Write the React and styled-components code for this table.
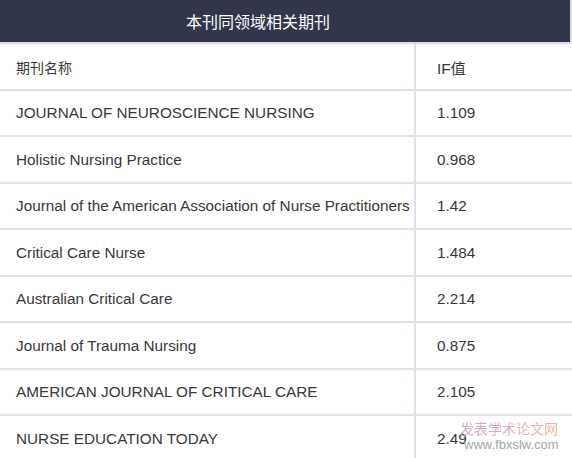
import React from "react";
import styled, { createGlobalStyle } from "styled-components";

const Global = createGlobalStyle`
  html, body { margin: 0; padding: 0; background: #fff; }
  body { font-family: "Liberation Sans", Arial, "Noto Sans CJK SC", sans-serif; overflow: hidden; }
`;

const Wrap = styled.div`
  position: relative;
  width: 572px;
  height: 458px;
  overflow: hidden;
  background: #fff;
`;

const Title = styled.div`
  height: 42px;
  background: #31364a;
  color: #fff;
  font-size: 16px;
  font-family: "Noto Sans CJK SC", sans-serif;
  display: flex;
  align-items: center;
  padding-left: 186px;
  border-right: 2px solid #d9dfe6;
  border-bottom: 2px solid #d9dfe6;
`;

const Row = styled.div`
  display: grid;
  grid-template-columns: 416px 1fr;
  height: ${(p) => p.$h}px;
  border-bottom: 2px solid #dce2e9;
  box-sizing: border-box;
`;

const Cell = styled.div`
  display: flex;
  align-items: center;
  padding-left: ${(p) => (p.$num ? 21 : 16)}px;
  font-size: 15.3px;
  color: #383838;
  white-space: nowrap;
  border-right: ${(p) => (p.$num ? "none" : "2px solid #dce2e9")};
  font-family: ${(p) =>
    p.$cjk
      ? '"Noto Sans CJK SC", sans-serif'
      : '"Liberation Sans", Arial, "Noto Sans CJK SC", sans-serif'};
  ${(p) => (p.$cjk ? "font-size: 14px;" : "")}
`;

const Mark = styled.div`
  position: absolute;
  left: 460px;
  top: 419px;
  display: flex;
  flex-direction: column;
  align-items: flex-start;
  pointer-events: none;
`;

const MarkCn = styled.span`
  font-family: "Noto Sans CJK SC", sans-serif;
  font-size: 14px;
  line-height: 18px;
  background: linear-gradient(90deg, #c9a6d6, #f2b48f);
  -webkit-background-clip: text;
  background-clip: text;
  color: transparent;
`;

const MarkEn = styled.span`
  font-family: "Liberation Sans", Arial, sans-serif;
  font-size: 13px;
  color: #a6a6a6;
  margin-left: 4px;
  line-height: 16px;
`;

const data = [
  ["JOURNAL OF NEUROSCIENCE NURSING", "1.109"],
  ["Holistic Nursing Practice", "0.968"],
  ["Journal of the American Association of Nurse Practitioners", "1.42"],
  ["Critical Care Nurse", "1.484"],
  ["Australian Critical Care", "2.214"],
  ["Journal of Trauma Nursing", "0.875"],
  ["AMERICAN JOURNAL OF CRITICAL CARE", "2.105"],
  ["NURSE EDUCATION TODAY", "2.49"],
];

export default function App() {
  return (
    <Wrap>
      <Global />
      <Title>本刊同领域相关期刊</Title>
      <Row $h={47}>
        <Cell $cjk>期刊名称</Cell>
        <Cell $num>IF值</Cell>
      </Row>
      {data.map(([n, v], i) => (
        <Row key={i} $h={i % 2 === 0 ? 46 : 47}>
          <Cell>{n}</Cell>
          <Cell $num>{v}</Cell>
        </Row>
      ))}
      <Mark>
        <MarkCn>发表学术论文网</MarkCn>
        <MarkEn>www.fbxslw.com</MarkEn>
      </Mark>
    </Wrap>
  );
}
